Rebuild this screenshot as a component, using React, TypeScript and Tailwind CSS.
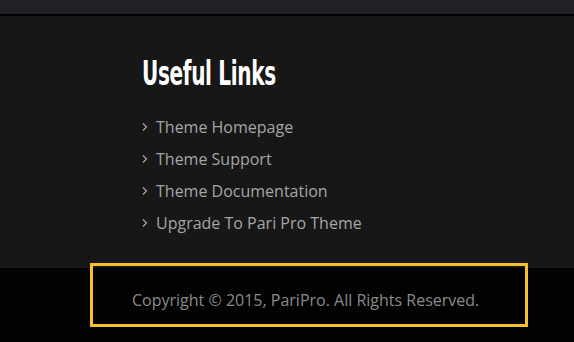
import React from "react";

const links = [
  "Theme Homepage",
  "Theme Support",
  "Theme Documentation",
  "Upgrade To Pari Pro Theme",
];

function Chevron() {
  return (
    <svg width="6" height="10" viewBox="0 0 6 10" className="shrink-0">
      <path d="M1 1.5 L4.5 5 L1 8.5" fill="none" stroke="#a3a3a3" strokeWidth="1.3" />
    </svg>
  );
}

export default function App() {
  return (
    <div className="w-[574px] h-[342px] flex flex-col bg-[#171717] overflow-hidden" style={{ fontFamily: '"Open Sans", sans-serif' }}>
      <div className="h-[14px] bg-[#212024]" />
      <div className="h-[2px] bg-black" />
      <div className="h-[252px] pl-[142px] pt-[40px]">
        <h2
          className="text-[33px] leading-[36px] font-bold text-white tracking-[-0.5px] origin-left scale-x-[0.675] whitespace-nowrap"
          style={{ fontFamily: '"DejaVu Sans Condensed", sans-serif' }}
        >
          Useful Links
        </h2>
        <ul className="mt-[24px] flex flex-col gap-[10px]">
          {links.map((l) => (
            <li key={l} className="flex items-center gap-[8px] h-[22px] text-[16px] text-[#a6a6a6]">
              <Chevron />
              <span>{l}</span>
            </li>
          ))}
        </ul>
      </div>
      <div className="flex-1 bg-[#020202] relative">
        <div className="absolute left-[90px] top-[-5px] w-[438px] h-[64px] border-[3px] border-[#f5c22b]" />
        <div className="absolute left-[132px] top-[20px] text-[16px] text-[#8a8a8a]">
          Copyright © 2015, PariPro. All Rights Reserved.
        </div>
      </div>
    </div>
  );
}
